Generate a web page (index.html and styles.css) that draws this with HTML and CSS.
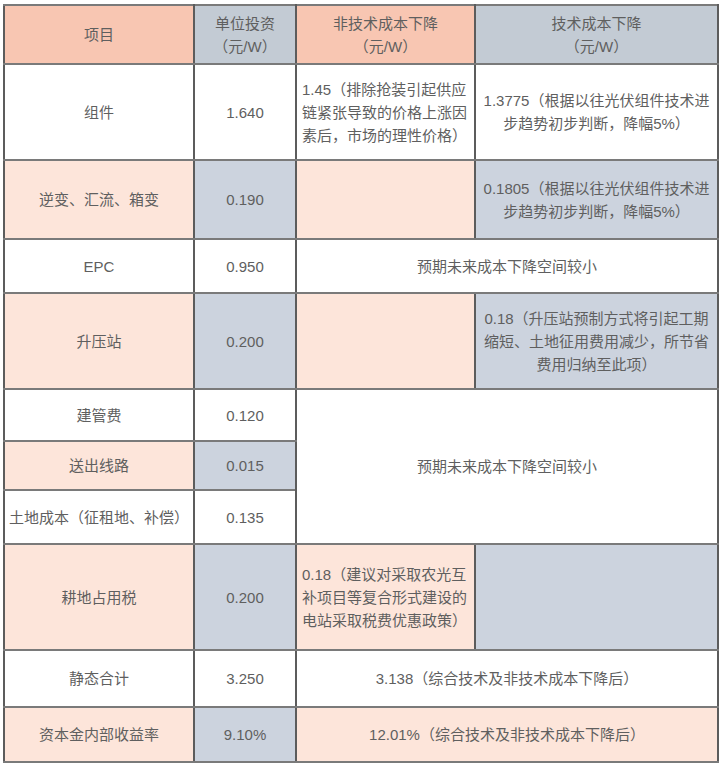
FILE: index.html
```html
<!DOCTYPE html>
<html lang="zh">
<head>
<meta charset="utf-8">
<title>成本下降表</title>
<link rel="stylesheet" href="styles.css">
</head>
<body>
<div class="wrap">
<table class="cost">
  <colgroup>
    <col class="c1"><col class="c2"><col class="c3"><col class="c4">
  </colgroup>
  <tr class="h-head">
    <th class="pk-h">项目</th>
    <th class="gy-h">单位投资<br>（元/W）</th>
    <th class="pk-h">非技术成本下降<br>（元/W）</th>
    <th class="gy-h">技术成本下降<br>（元/W）</th>
  </tr>
  <tr class="h-96">
    <td>组件</td>
    <td>1.640</td>
    <td class="left">1.45（排除抢装引起供应链紧张导致的价格上涨因素后，市场的理性价格）</td>
    <td>1.3775（根据以往光伏组件技术进步趋势初步判断，降幅5%）</td>
  </tr>
  <tr class="h-79">
    <td class="pk">逆变、汇流、箱变</td>
    <td class="gy">0.190</td>
    <td class="pk"></td>
    <td class="gy">0.1805（根据以往光伏组件技术进步趋势初步判断，降幅5%）</td>
  </tr>
  <tr class="h-54">
    <td>EPC</td>
    <td>0.950</td>
    <td colspan="2">预期未来成本下降空间较小</td>
  </tr>
  <tr class="h-96">
    <td class="pk">升压站</td>
    <td class="gy">0.200</td>
    <td class="pk"></td>
    <td class="gy">0.18（升压站预制方式将引起工期缩短、土地征用费用减少，所节省费用归纳至此项）</td>
  </tr>
  <tr class="h-52">
    <td>建管费</td>
    <td>0.120</td>
    <td colspan="2" rowspan="3">预期未来成本下降空间较小</td>
  </tr>
  <tr class="h-49">
    <td class="pk">送出线路</td>
    <td class="gy">0.015</td>
  </tr>
  <tr class="h-54">
    <td>土地成本（征租地、补偿）</td>
    <td>0.135</td>
  </tr>
  <tr class="h-106">
    <td class="pk">耕地占用税</td>
    <td class="gy">0.200</td>
    <td class="pk left">0.18（建议对采取农光互补项目等复合形式建设的电站采取税费优惠政策）</td>
    <td class="gy"></td>
  </tr>
  <tr class="h-57">
    <td>静态合计</td>
    <td>3.250</td>
    <td colspan="2">3.138（综合技术及非技术成本下降后）</td>
  </tr>
  <tr class="h-55">
    <td class="pk">资本金内部收益率</td>
    <td class="gy">9.10%</td>
    <td class="pk" colspan="2">12.01%（综合技术及非技术成本下降后）</td>
  </tr>
</table>
</div>
</body>
</html>
```

FILE: styles.css
```css
html, body {
  margin: 0;
  padding: 0;
  background: #ffffff;
}

.wrap {
  padding: 4px 3px 0 3px;
}

.cost {
  width: 714px;
  table-layout: fixed;
  border-collapse: collapse;
  border: 2px solid #3a3a3a;
  font-family: "Liberation Sans", "Noto Sans CJK SC", sans-serif;
  font-size: 15px;
  line-height: 23px;
  color: #5f5f5f;
}

.c1 { width: 190px; }
.c2 { width: 102px; }
.c3 { width: 179px; }
.c4 { width: 243px; }

.cost th,
.cost td {
  border-top: 2px solid #7a7a7a;
  border-bottom: 2px solid #7a7a7a;
  border-left: 2px solid #5c5c5c;
  border-right: 2px solid #5c5c5c;
  padding: 0 4px;
  text-align: center;
  vertical-align: middle;
  font-weight: normal;
  background: #ffffff;
}

.cost th.pk-h { background: #f8c6b2; }
.cost th.gy-h { background: #c3cbd4; }
.cost td.pk { background: #fde5da; }
.cost td.gy { background: #ccd3de; }
.cost td.left { text-align: left; padding-left: 5px; }

.h-head { height: 59px; }
.h-96 { height: 96px; }
.h-79 { height: 79px; }
.h-54 { height: 54px; }
.h-52 { height: 52px; }
.h-49 { height: 49px; }
.h-106 { height: 106px; }
.h-57 { height: 57px; }
.h-55 { height: 55px; }
```
